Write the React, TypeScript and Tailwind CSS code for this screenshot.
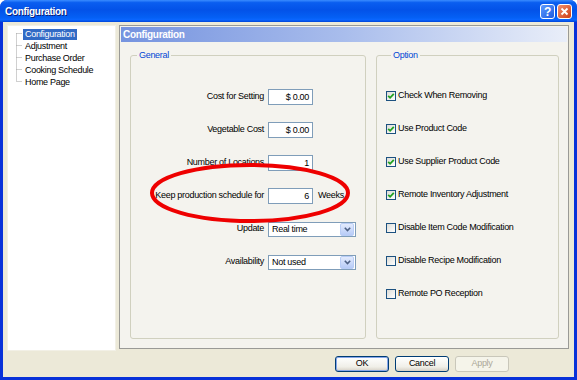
import React from "react";

const F = "font-['Liberation_Sans',Arial,sans-serif] tracking-[-0.3px]";

function TextBox({ value }: { value: string }) {
  return (
    <div className="w-[45px] h-[16px] border border-[#7f9db9] bg-white text-right pr-[3px] text-[9px] leading-[14px] text-black">
      {value}
    </div>
  );
}

function Select({ value }: { value: string }) {
  return (
    <div className="w-[88px] h-[15px] border border-[#7f9db9] bg-white flex items-center">
      <span className="flex-1 pl-[3px] text-[9px] leading-[13px] text-black">{value}</span>
      <div className="w-[14px] h-[13px] mr-[1px] rounded-[2px] bg-[linear-gradient(to_bottom,#e3ebfd,#b7cbf7)] border border-[#b9cdf6] flex items-center justify-center">
        <svg width="7" height="5" viewBox="0 0 7 5">
          <path d="M0.8 0.8 L3.5 3.6 L6.2 0.8" stroke="#4d6185" strokeWidth="1.6" fill="none" />
        </svg>
      </div>
    </div>
  );
}

function Check({ checked, label }: { checked?: boolean; label: string }) {
  return (
    <div className="flex items-center h-[13px]">
      <div className="w-[10px] h-[10px] border border-[#1c5180] bg-[linear-gradient(135deg,#dcdcd7,#ffffff)] flex items-center justify-center">
        {checked && (
          <svg width="8" height="8" viewBox="0 0 8 8">
            <path d="M1.2 3.8 L3.1 5.8 L6.8 1.8" stroke="#21a121" strokeWidth="1.8" fill="none" />
          </svg>
        )}
      </div>
      <span className="ml-[2px] text-[9px] text-black">{label}</span>
    </div>
  );
}

function Btn({ label, def, disabled }: { label: string; def?: boolean; disabled?: boolean }) {
  if (disabled)
    return (
      <div className="w-[54px] h-[16px] rounded-[3px] border border-[#c9c7ba] bg-[#f5f4ea] flex items-center justify-center text-[9px] text-[#aca899]">
        {label}
      </div>
    );
  return (
    <div
      className={`w-[54px] h-[16px] rounded-[3px] border border-[#003c74] bg-[linear-gradient(to_bottom,#ffffff,#f0efe8_70%,#d6d0c5)] flex items-center justify-center text-[9px] text-black ${
        def ? "shadow-[inset_0_0_0_1px_#86a6ea]" : ""
      }`}
    >
      {label}
    </div>
  );
}

function Row({ label, children }: { label: string; children: React.ReactNode }) {
  return (
    <div className="flex items-center h-[16px]">
      <div className="w-[133px] text-right text-[9px] text-black whitespace-nowrap">{label}</div>
      <div className="ml-[4px] flex items-center">{children}</div>
    </div>
  );
}

export default function App() {
  const tree = ["Configuration", "Adjustment", "Purchase Order", "Cooking Schedule", "Home Page"];
  return (
    <div className={`relative w-[577px] h-[380px] overflow-hidden bg-white ${F}`}>
      <div className="w-full h-full flex flex-col rounded-t-[7px] bg-[#0831d9]">
        {/* title bar */}
        <div className="h-[22px] shrink-0 flex items-center px-[5px] rounded-t-[7px] bg-[linear-gradient(to_bottom,#3a8cff_0%,#0a5ef0_12%,#0352e8_45%,#0460f5_80%,#0a66ff_90%,#0044d8_100%)]">
          <span className="text-white font-bold text-[10px] [text-shadow:1px_1px_0_#0a1f7a]">Configuration</span>
          <div className="ml-auto flex items-center gap-[2px] mt-[1px]">
            <div className="w-[15px] h-[15px] rounded-[3px] border border-white bg-[linear-gradient(135deg,#5d9bff,#1d5be0)] flex items-center justify-center text-white font-bold text-[12px] leading-none">
              ?
            </div>
            <div className="w-[15px] h-[15px] rounded-[3px] border border-white bg-[linear-gradient(135deg,#f09070,#cf3e14)] flex items-center justify-center">
              <svg width="9" height="9" viewBox="0 0 9 9">
                <path d="M1.5 1.5 L7.5 7.5 M7.5 1.5 L1.5 7.5" stroke="white" strokeWidth="1.8" />
              </svg>
            </div>
          </div>
        </div>
        {/* body */}
        <div className="flex-1 mx-[3px] mb-[3px] bg-[#ece9d8] flex flex-col">
          <div className="flex items-start pt-[3px]">
            {/* tree */}
            <div className="relative ml-[4px] w-[109px] h-[326px] bg-white border border-[#f2f0e6]">
              <svg className="absolute left-0 top-0" width="20" height="70">
                <path
                  d="M8.5 7.5 V55.5 M8.5 7.5 H14 M8.5 19.5 H14 M8.5 31.5 H14 M8.5 43.5 H14 M8.5 55.5 H14"
                  stroke="#a0a0a0"
                  strokeWidth="1"
                  strokeDasharray="1 1"
                  fill="none"
                />
              </svg>
              <div className="pt-[2px] pl-[15px] flex flex-col">
                {tree.map((t, i) => (
                  <div key={t} className="h-[12px] flex items-center">
                    <span
                      className={`px-[2px] h-[11px] leading-[11px] text-[9px] whitespace-nowrap ${
                        i === 0 ? "bg-[#316ac5] text-white" : "text-black"
                      }`}
                    >
                      {t}
                    </span>
                  </div>
                ))}
              </div>
            </div>
            {/* panel */}
            <div className="ml-[3px] w-[450px] h-[324px] border border-[#9a9a96] bg-[#f4f3ee] p-[1px] flex flex-col">
              <div className="h-[15px] shrink-0 flex items-center pl-[2px] bg-[linear-gradient(to_right,#7593df,#a9bdec_50%,#e9eef9)]">
                <span className="text-white font-bold text-[10px]">Configuration</span>
              </div>
              <div className="flex mt-[7px]">
                <fieldset className="ml-[9px] w-[236px] h-[290px] border border-[#d0d0bf] rounded-[3px] pt-[28px]">
                  <legend className="ml-[6px] px-[2px] text-[9px] leading-[12px] text-[#0046d5]">General</legend>
                  <div className="flex flex-col gap-[17px]">
                    <Row label="Cost for Setting">
                      <TextBox value="$ 0.00" />
                    </Row>
                    <Row label="Vegetable Cost">
                      <TextBox value="$ 0.00" />
                    </Row>
                    <Row label="Number of Locations">
                      <TextBox value="1" />
                    </Row>
                    <Row label="Keep production schedule for">
                      <TextBox value="6" />
                      <span className="ml-[5px] text-[9px] text-black">Weeks</span>
                    </Row>
                    <Row label="Update">
                      <Select value="Real time" />
                    </Row>
                    <Row label="Availability">
                      <Select value="Not used" />
                    </Row>
                  </div>
                </fieldset>
                <fieldset className="ml-[10px] w-[183px] h-[290px] border border-[#d0d0bf] rounded-[3px] pt-[28px] pl-[9px]">
                  <legend className="ml-[5px] px-[2px] text-[9px] leading-[12px] text-[#0046d5]">Option</legend>
                  <div className="flex flex-col gap-[20px]">
                    <Check checked label="Check When Removing" />
                    <Check checked label="Use Product Code" />
                    <Check checked label="Use Supplier Product Code" />
                    <Check checked label="Remote Inventory Adjustment" />
                    <Check label="Disable Item Code Modification" />
                    <Check label="Disable Recipe Modification" />
                    <Check label="Remote PO Reception" />
                  </div>
                </fieldset>
              </div>
            </div>
          </div>
          {/* buttons */}
          <div className="flex justify-end gap-[6px] pr-[65px] mt-[5px]">
            <Btn label="OK" def />
            <Btn label="Cancel" />
            <Btn label="Apply" disabled />
          </div>
        </div>
      </div>
      {/* red annotation ellipse */}
      <svg className="absolute left-0 top-0 pointer-events-none" width="577" height="380">
        <ellipse cx="250" cy="193" rx="98" ry="28" stroke="#ee0000" strokeWidth="4" fill="none" />
      </svg>
    </div>
  );
}
